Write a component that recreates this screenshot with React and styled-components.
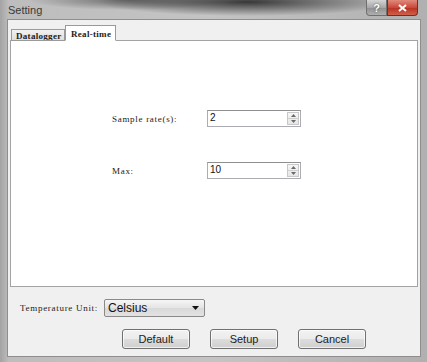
import React from 'react';
import styled, { createGlobalStyle } from 'styled-components';

const Global = createGlobalStyle`
  html, body { margin: 0; padding: 0; background: #8c8c8c; }
  body { font-family: "Liberation Sans", Arial, sans-serif; }
`;

const Window = styled.div`
  width: 427px;
  height: 362px;
  display: flex;
  flex-direction: column;
  box-sizing: border-box;
  background:
    radial-gradient(ellipse 150px 14px at 58% 2px, rgba(40,40,40,0.9), rgba(40,40,40,0) 100%),
    radial-gradient(ellipse 100px 10px at 30% 0px, rgba(60,60,60,0.65), rgba(60,60,60,0) 100%),
    linear-gradient(to right, #a3a3a3 0, #bdbdbd 2%, #c4c4c4 50%, #b0b0b0 100%);
`;

const TitleBar = styled.div`
  height: 19px;
  display: flex;
  align-items: flex-start;
  justify-content: space-between;
  padding: 0 9px 0 8px;
`;

const Title = styled.div`
  font-family: "Liberation Sans", Arial, sans-serif;
  font-size: 11px;
  color: #3a3a3a;
  padding-top: 4px;
`;

const Captions = styled.div`
  display: flex;
  height: 17px;
`;

const CapButton = styled.div`
  width: ${p => p.$w}px;
  height: 16px;
  display: flex;
  align-items: center;
  justify-content: center;
  box-sizing: border-box;
  border: 1px solid ${p => (p.$red ? '#7a2a22' : '#6f6f6f')};
  border-top: none;
  border-radius: ${p => (p.$red ? '0 0 4px 0' : '0 0 0 4px')};
  background: ${p =>
    p.$red
      ? 'linear-gradient(#e08a7c, #c84a3a 50%, #b8301f 51%, #d0604a)'
      : 'linear-gradient(#d4d4d4, #a8a8a8 50%, #8e8e8e 51%, #b0b0b0)'};
  color: #fff;
  font-family: "Liberation Sans", Arial, sans-serif;
  font-weight: bold;
  font-size: 11px;
  text-shadow: 0 0 2px rgba(0,0,0,0.6);
`;

const Body = styled.div`
  flex: 1;
  margin: 0 6px 5px 7px;
  background: #f0f0f0;
  border: 1px solid #8e8e8e;
  display: flex;
  flex-direction: column;
  padding: 4px 2px 0 2px;
`;

const TabStrip = styled.div`
  display: flex;
  align-items: flex-end;
  height: 16px;
  padding-left: 1px;
  position: relative;
  z-index: 1;
`;

const Tab = styled.div`
  font-family: "Liberation Serif", "DejaVu Serif", serif;
  font-size: 9px;
  font-weight: bold;
  letter-spacing: 0.3px;
  white-space: nowrap;
  color: #222;
  box-sizing: border-box;
  height: ${p => (p.$active ? 16 : 12)}px;
  line-height: 10px;
  padding: ${p => (p.$active ? '3px 0 0 5px' : '1px 0 0 4px')};
  background: ${p => (p.$active ? '#ffffff' : 'linear-gradient(#f2f2f2, #dedede)')};
  border: 1px solid #9a9a9a;
  border-bottom: ${p => (p.$active ? '1px solid #fff' : '1px solid #9a9a9a')};
  margin-bottom: -1px;
  width: ${p => p.$w}px;
  overflow: hidden;
`;

const Panel = styled.div`
  height: 247px;
  background: #fff;
  border: 1px solid #a3a3a3;
  box-sizing: border-box;
  padding: 69px 0 0 101px;
  display: flex;
  flex-direction: column;
  gap: 35px;
`;

const FieldRow = styled.div`
  display: flex;
  align-items: center;
  height: 17px;
`;

const Label = styled.div`
  font-family: "Liberation Serif", "DejaVu Serif", serif;
  font-size: 9px;
  letter-spacing: 0.7px;
  white-space: nowrap;
  color: #222;
  width: ${p => p.$w || 95}px;
`;

const SpinBox = styled.div`
  width: 94px;
  height: 17px;
  box-sizing: border-box;
  border: 1px solid #abadb3;
  border-top-color: #8e8f8f;
  background: #fff;
  display: flex;
  align-items: stretch;
`;

const SpinValue = styled.div`
  flex: 1;
  font-family: "Liberation Sans", Arial, sans-serif;
  font-size: 10px;
  color: #111;
  padding: 1px 0 0 2px;
`;

const SpinArrows = styled.div`
  width: 12px;
  margin: 1px 1px 1px 0;
  display: flex;
  flex-direction: column;
  border: 1px solid #c8c8c8;
  box-sizing: border-box;
  background: linear-gradient(#f6f6f6, #e6e6e6);
`;

const Arrow = styled.div`
  flex: 1;
  display: flex;
  align-items: center;
  justify-content: center;
  & + & { border-top: 1px solid #d0d0d0; }
`;

const Footer = styled.div`
  display: flex;
  flex-direction: column;
  padding: 12px 0 0 10px;
`;

const UnitRow = styled.div`
  display: flex;
  align-items: center;
  height: 18px;
`;

const Select = styled.div`
  width: 101px;
  height: 18px;
  box-sizing: border-box;
  border: 1px solid #8a8a8a;
  border-radius: 2px;
  background: linear-gradient(#f6f6f6, #e4e4e4 50%, #d9d9d9 51%, #e2e2e2);
  display: flex;
  align-items: center;
  justify-content: space-between;
  padding: 0 5px 0 3px;
  font-family: "Liberation Sans", Arial, sans-serif;
  font-size: 12px;
  color: #111;
`;

const Buttons = styled.div`
  display: flex;
  gap: 20px;
  padding: 12px 0 0 102px;
`;

const Button = styled.div`
  width: 68px;
  height: 20px;
  box-sizing: border-box;
  border: 1px solid #707070;
  border-radius: 3px;
  background: linear-gradient(#f2f2f2, #ebebeb 50%, #dddddd 51%, #cfcfcf);
  box-shadow: inset 0 0 0 1px rgba(255,255,255,0.7);
  display: flex;
  align-items: center;
  justify-content: center;
  font-family: "Liberation Sans", Arial, sans-serif;
  font-size: 11px;
  color: #222;
`;

function Spin({ value }) {
  return (
    <SpinBox>
      <SpinValue>{value}</SpinValue>
      <SpinArrows>
        <Arrow>
          <svg width="5" height="3" viewBox="0 0 5 3"><path d="M2.5 0L5 3H0z" fill="#6a6a6a" /></svg>
        </Arrow>
        <Arrow>
          <svg width="5" height="3" viewBox="0 0 5 3"><path d="M0 0h5L2.5 3z" fill="#6a6a6a" /></svg>
        </Arrow>
      </SpinArrows>
    </SpinBox>
  );
}

export default function App() {
  return (
    <>
      <Global />
      <Window>
        <TitleBar>
          <Title>Setting</Title>
          <Captions>
            <CapButton $w={21}>?</CapButton>
            <CapButton $w={31} $red>
              <svg width="9" height="8" viewBox="0 0 9 8">
                <path d="M1 1l7 6M8 1L1 7" stroke="#fff" strokeWidth="2" />
              </svg>
            </CapButton>
          </Captions>
        </TitleBar>
        <Body>
          <TabStrip>
            <Tab $w={54}>Datalogger</Tab>
            <Tab $w={51} $active>Real-time</Tab>
          </TabStrip>
          <Panel>
            <FieldRow>
              <Label>Sample rate(s):</Label>
              <Spin value="2" />
            </FieldRow>
            <FieldRow>
              <Label>Max:</Label>
              <Spin value="10" />
            </FieldRow>
          </Panel>
          <Footer>
            <UnitRow>
              <Label $w={84}>Temperature Unit:</Label>
              <Select>
                <span>Celsius</span>
                <svg width="7" height="4" viewBox="0 0 7 4"><path d="M0 0h7L3.5 4z" fill="#111" /></svg>
              </Select>
            </UnitRow>
            <Buttons>
              <Button>Default</Button>
              <Button>Setup</Button>
              <Button>Cancel</Button>
            </Buttons>
          </Footer>
        </Body>
      </Window>
    </>
  );
}
